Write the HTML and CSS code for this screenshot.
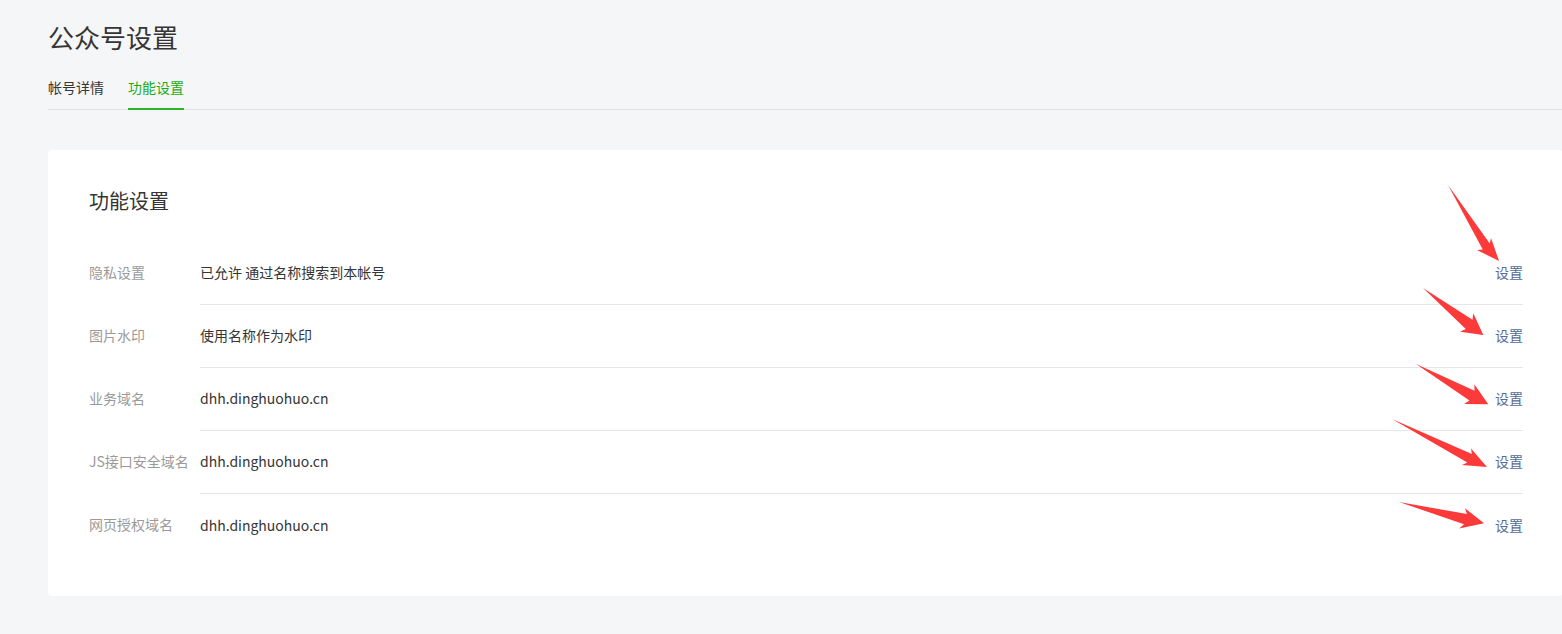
FILE: index.html
```html
<!DOCTYPE html>
<html lang="zh-CN">
<head>
<meta charset="utf-8">
<title>公众号设置</title>
<link rel="stylesheet" href="styles.css">
</head>
<body>
<div class="page">
  <h1 class="page-title">公众号设置</h1>
  <nav class="tabs">
    <a class="tab">帐号详情</a>
    <a class="tab tab-active">功能设置</a>
  </nav>
  <section class="card">
    <h2 class="card-title">功能设置</h2>
    <div class="rows">
      <div class="row">
        <div class="label">隐私设置</div>
        <div class="content"><span class="value">已允许 通过名称搜索到本帐号</span><a class="link">设置</a></div>
      </div>
      <div class="row">
        <div class="label">图片水印</div>
        <div class="content"><span class="value">使用名称作为水印</span><a class="link">设置</a></div>
      </div>
      <div class="row">
        <div class="label">业务域名</div>
        <div class="content"><span class="value">dhh.dinghuohuo.cn</span><a class="link">设置</a></div>
      </div>
      <div class="row">
        <div class="label">JS接口安全域名</div>
        <div class="content"><span class="value">dhh.dinghuohuo.cn</span><a class="link">设置</a></div>
      </div>
      <div class="row">
        <div class="label">网页授权域名</div>
        <div class="content"><span class="value">dhh.dinghuohuo.cn</span><a class="link">设置</a></div>
      </div>
    </div>
  </section>
</div>
<svg class="annotations" width="1562" height="634" viewBox="0 0 1562 634">
  <polygon points="1448,185 1489.75,243.55 1491,238 1499,261 1477,250 1482.75,249.55"/>
  <polygon points="1423,288 1472.5,319.8 1473.3,313.3 1483.3,335 1460,331.7 1465.8,329"/>
  <polygon points="1416,364 1474.6,390.7 1474.3,384.3 1488.3,404.3 1464,404 1469.5,400.6"/>
  <polygon points="1392,419 1471.85,454.1 1471,448.5 1487,467 1462,465 1467.35,462.4"/>
  <polygon points="1399,502 1466.9,514.05 1465,508.3 1484,523.3 1459.3,528.5 1464,524.15"/>
</svg>
</body>
</html>
```
FILE: styles.css
```css
html, body {
  margin: 0;
  padding: 0;
}
body {
  background: #f5f6f7;
  font-family: "Noto Sans CJK SC", "Liberation Sans", sans-serif;
  color: #353535;
  width: 1562px;
  height: 634px;
  overflow: hidden;
  position: relative;
}
.page {
  margin-left: 48px;
  width: 1540px;
  padding-top: 18px;
}
.page-title {
  margin: 0;
  font-size: 26px;
  font-weight: 400;
  line-height: 38px;
  color: #353535;
}
.tabs {
  display: flex;
  gap: 24px;
  margin-top: 14px;
  border-bottom: 1px solid #e0e1e3;
}
.tab {
  font-size: 14px;
  line-height: 20px;
  padding: 7px 0 11px;
  color: #353535;
  border-bottom: 2px solid transparent;
  margin-bottom: -1px;
}
.tab-active {
  color: #1aad19;
  border-bottom-color: #2db52c;
}
.card {
  margin-top: 40px;
  width: 1515px;
  box-sizing: border-box;
  background: #fff;
  border-radius: 4px;
  padding: 35px 40px 39px 41px;
}
.card-title {
  margin: 0;
  font-size: 20px;
  font-weight: 400;
  line-height: 32px;
  color: #353535;
}
.rows {
  margin-top: 25px;
  display: flex;
  flex-direction: column;
}
.row {
  display: flex;
  align-items: stretch;
  height: 63px;
}
.label {
  width: 111px;
  flex: none;
  font-size: 14px;
  color: #9a9a9a;
  display: flex;
  align-items: center;
  padding-bottom: 3px;
  box-sizing: border-box;
}
.content {
  flex: 1;
  display: flex;
  align-items: center;
  justify-content: space-between;
  border-bottom: 1px solid #e7e7eb;
  padding-bottom: 2px;
}
.row:last-child .content {
  border-bottom: none;
}
.value {
  font-size: 14px;
  color: #353535;
}
.link {
  font-size: 14px;
  color: #576b95;
  cursor: pointer;
}
.annotations {
  position: absolute;
  left: 0;
  top: 0;
  pointer-events: none;
}
.annotations polygon {
  fill: #fc3a3a;
}
```
